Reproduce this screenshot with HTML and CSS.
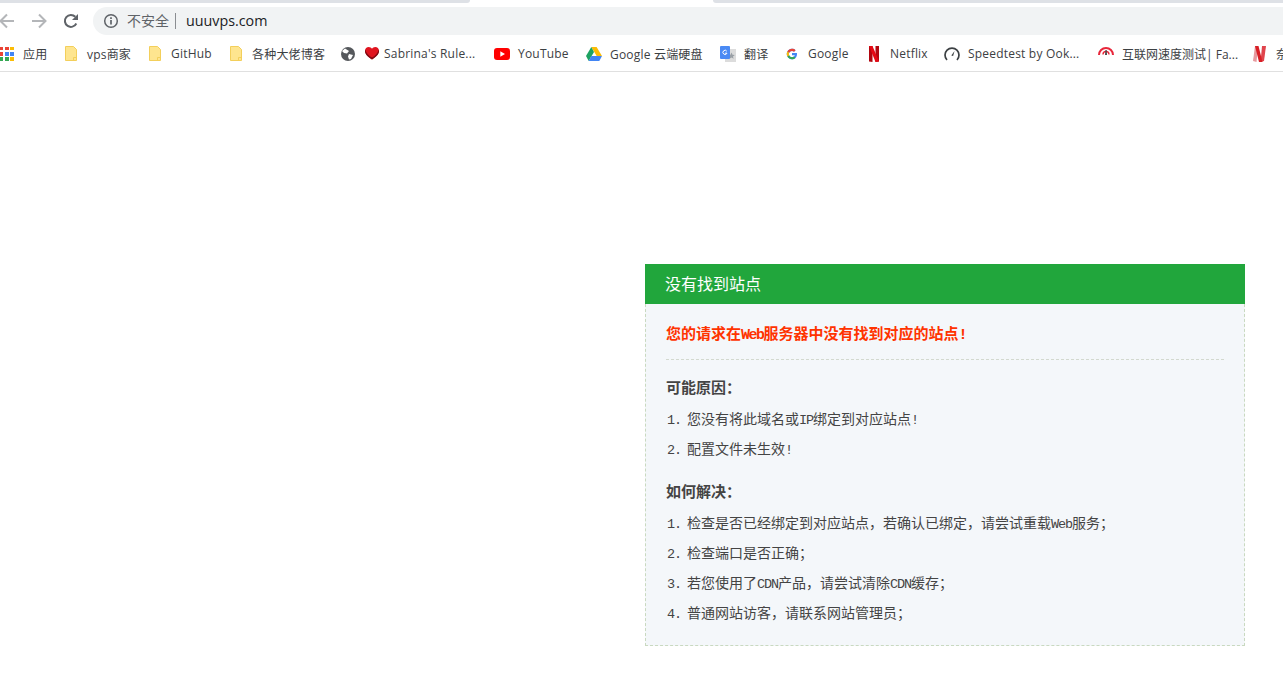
FILE: index.html
```html
<!DOCTYPE html>
<html lang="zh-CN">
<head>
<meta charset="utf-8">
<title>没有找到站点</title>
<link rel="stylesheet" href="styles.css">
</head>
<body>
<header class="chrome">
  <div class="tabstrip"><div class="tab-left"></div><div class="tab-active"></div><div class="tab-right"></div></div>
  <div class="toolbar">
    <div class="nav">
      <svg class="nav-icon" width="16" height="16" viewBox="0 0 16 16"><path d="M15 8H1.500M8 1.500 1.500 8 8 14.500" fill="none" stroke="#b4b6b9" stroke-width="2"/></svg>
      <svg class="nav-icon" width="16" height="16" viewBox="0 0 16 16"><path d="M1 8h13.500M8 1.500 14.500 8 8 14.500" fill="none" stroke="#b4b6b9" stroke-width="2"/></svg>
      <svg class="nav-icon" width="16" height="16" viewBox="0 0 16 16"><path d="M13.300 10.500A6 6 0 1 1 12.300 3.800" fill="none" stroke="#5f6368" stroke-width="2"/><path d="M15 1v6H9z" fill="#5f6368"/></svg>
    </div>
    <div class="omnibox">
      <svg width="16" height="16" viewBox="0 0 16 16"><circle cx="8" cy="8" r="6.300" fill="none" stroke="#5f6368" stroke-width="1.500"/><path d="M8 7v4.500" stroke="#5f6368" stroke-width="1.700"/><path d="M8 4.200v1.700" stroke="#5f6368" stroke-width="1.700"/></svg>
      <span class="insecure">不安全</span>
      <span class="sep"></span>
      <span class="url">uuuvps.com</span>
    </div>
  </div>
  <nav class="bookmarks">
    <a class="bm"><svg class="apps" width="14" height="14" viewBox="0 0 14 14"><rect x="0" y="0" width="3" height="3" fill="#ea4335"/><rect x="5" y="0" width="4" height="3" fill="#ea4335"/><rect x="10" y="0" width="4" height="3" fill="#fbbc05"/><rect x="0" y="5" width="3" height="4" fill="#ea4335"/><rect x="5" y="5" width="4" height="4" fill="#4285f4"/><rect x="10" y="5" width="4" height="4" fill="#4285f4"/><rect x="0" y="10" width="3" height="4" fill="#34a853"/><rect x="5" y="10" width="4" height="4" fill="#34a853"/><rect x="10" y="10" width="4" height="4" fill="#fbbc05"/></svg><span>应用</span></a>
    <a class="bm"><svg class="folder" width="12" height="15" viewBox="0 0 12 15"><path d="M.5.500h8l3 3v11H.5z" fill="#fee58f" stroke="#f3cf5b"/><path d="M8.500 14.500v-3h3" fill="none" stroke="#f3cf5b"/></svg><span>vps商家</span></a>
    <a class="bm"><svg class="folder" width="12" height="15" viewBox="0 0 12 15"><path d="M.5.500h8l3 3v11H.5z" fill="#fee58f" stroke="#f3cf5b"/><path d="M8.500 14.500v-3h3" fill="none" stroke="#f3cf5b"/></svg><span>GitHub</span></a>
    <a class="bm"><svg class="folder" width="12" height="15" viewBox="0 0 12 15"><path d="M.5.500h8l3 3v11H.5z" fill="#fee58f" stroke="#f3cf5b"/><path d="M8.500 14.500v-3h3" fill="none" stroke="#f3cf5b"/></svg><span>各种大佬博客</span></a>
    <a class="bm"><svg width="14" height="14" viewBox="0 0 14 14"><circle cx="7" cy="7" r="7" fill="#55585c"/><path d="M4 1.500 8 4 6 6.500 3 6 1 4zM8 7l4 1-2 4-2 .5-1-3z" fill="#fff"/></svg><svg class="heart" width="14" height="13" viewBox="0 0 14 13"><path d="M7 12.500C3 9.500 0 7.300 0 3.900 0 1.700 1.700 0 3.800 0 5.100 0 6.300.7 7 1.800 7.700.7 8.900 0 10.200 0 12.300 0 14 1.700 14 3.900c0 3.400-3 5.600-7 8.600z" fill="#e0141f"/><path d="M7 12.500C3 9.500 0 7.300 0 3.900c0-.5.100-1 .3-1.500C1 6 4 9 7 10.500c3-1.500 6-4.500 6.700-8.100.2.500.3 1 .3 1.500 0 3.400-3 5.600-7 8.600z" fill="#7d0c14"/></svg><span>Sabrina's Rule...</span></a>
    <a class="bm"><svg class="wide" width="16" height="12" viewBox="0 0 16 12"><rect width="16" height="12" rx="3" fill="#f00"/><path d="M6.300 3.200v5.600L11 6z" fill="#fff"/></svg><span>YouTube</span></a>
    <a class="bm"><svg class="wide" width="16" height="14" viewBox="0 0 16 14"><path d="M5.300 0h5.300l5.400 9h-5.300z" fill="#fbbc05"/><path d="M5.300 0 0 9l2.700 5 5.300-9z" fill="#1ea362"/><path d="M2.700 14h10.600l2.700-5H5.300z" fill="#4285f4"/></svg><span>Google 云端硬盘</span></a>
    <a class="bm"><svg class="wide" width="16" height="16" viewBox="0 0 16 16"><rect x="5" y="3" width="11" height="13" fill="#dcdcdc"/><path d="M11.500 6.500l1 2.300 2.300.2-1.800 1.500.6 2.300-2.100-1.300-2 1.300.6-2.300L8.300 9l2.200-.2z" fill="#9aa0a6"/><rect width="10" height="13" rx="1" fill="#4a8af4"/><path d="M6.800 5.200A2.100 2.100 0 1 0 7 7.200H5" fill="none" stroke="#fff" stroke-width="1"/></svg><span>翻译</span></a>
    <a class="bm"><svg class="gicon" width="12" height="12" viewBox="0 0 48 48"><path d="M43.600 20H24v8.500h11.300C33.700 33.300 29.300 36.500 24 36.500c-6.900 0-12.500-5.600-12.500-12.500S17.100 11.500 24 11.500c3.100 0 6 1.100 8.200 3l6-6C34.500 5 29.500 3 24 3 12.400 3 3 12.400 3 24s9.400 21 21 21c10.500 0 20-7.600 20-21 0-1.400-.1-2.700-.4-4z" fill="#4285f4"/><path d="M5.400 14.300l7 5.100C14.200 14.800 18.700 11.500 24 11.500c3.100 0 6 1.100 8.200 3l6-6C34.500 5 29.500 3 24 3 16 3 9 7.500 5.400 14.300z" fill="#ea4335"/><path d="M24 45c5.400 0 10.300-1.900 14-5.300l-6.500-5.500c-2 1.500-4.600 2.300-7.500 2.300-5.300 0-9.700-3.200-11.400-7.900l-6.900 5.300C9.100 40.400 16 45 24 45z" fill="#34a853"/><path d="M12.600 28.600c-.7-1.400-1.100-3-1.100-4.600s.4-3.200.9-4.600l-7-5.100C3.900 17.200 3 20.500 3 24s.9 6.900 2.700 9.900z" fill="#fbbc05"/></svg><span>Google</span></a>
    <a class="bm"><svg class="gicon" width="12" height="16" viewBox="0 0 12 16"><path d="M1 0h3.500v16L1 15.500z" fill="#b1060f"/><path d="M7.500 0H11v15.500L7.500 16z" fill="#b1060f"/><path d="M1 0h3.500L11 15.500 7.500 16z" fill="#e50914"/></svg><span>Netflix</span></a>
    <a class="bm"><svg class="wide" width="16" height="16" viewBox="0 0 16 16"><path d="M3 14A7 7 0 1 1 13 14" fill="none" stroke="#3c4043" stroke-width="1.700"/><path d="M7.300 9.500 10.500 5l-1.400 5z" fill="#3c4043"/></svg><span>Speedtest by Ook...</span></a>
    <a class="bm"><svg class="wide arc" width="16" height="11" viewBox="0 0 16 11"><path d="M1 10A7 7 0 0 1 15 10" fill="none" stroke="#e8273b" stroke-width="2"/><path d="M5 9.500A3 3 0 0 1 11 9.500" fill="none" stroke="#e8273b" stroke-width="1.400"/><path d="M7 10 7.500 5h1.200l.3 5z" fill="#444"/></svg><span>互联网速度测试| Fa...</span></a>
    <a class="bm"><svg class="gicon" width="13" height="16" viewBox="0 0 13 16"><path d="M2 0h3L3.500 16 0 15z" fill="#e79a9f"/><path d="M9 0h4l-2 15-3.500 1z" fill="#e0444c"/><path d="M2 0h3.500l4 16H6z" fill="#d81f26"/></svg><span>奈飞</span></a>
  </nav>
</header>

<main class="page">
  <section class="card">
    <h1 class="card-title">没有找到站点</h1>
    <div class="card-body">
      <p class="alert">您的请求在<span class="lat">Web</span>服务器中没有找到对应的站点<span class="lat">!</span></p>
      <h2 class="cause">可能原因&#xFF1A;</h2>
      <ol class="steps">
        <li><span class="num">1.</span><span>您没有将此域名或<span class="lat">IP</span>绑定到对应站点<span class="lat">!</span></span></li>
        <li><span class="num">2.</span><span>配置文件未生效<span class="lat">!</span></span></li>
      </ol>
      <h2 class="cause">如何解决&#xFF1A;</h2>
      <ol class="steps">
        <li><span class="num">1.</span><span>检查是否已经绑定到对应站点&#xFF0C;若确认已绑定&#xFF0C;请尝试重载<span class="lat">Web</span>服务&#xFF1B;</span></li>
        <li><span class="num">2.</span><span>检查端口是否正确&#xFF1B;</span></li>
        <li><span class="num">3.</span><span>若您使用了<span class="lat">CDN</span>产品&#xFF0C;请尝试清除<span class="lat">CDN</span>缓存&#xFF1B;</span></li>
        <li><span class="num">4.</span><span>普通网站访客&#xFF0C;请联系网站管理员&#xFF1B;</span></li>
      </ol>
    </div>
  </section>
</main>
</body>
</html>
```
FILE: styles.css
```css
* { box-sizing: border-box; }
html, body { margin: 0; padding: 0; background: #fff; }
body { height: 686px; overflow: hidden; }

.chrome { display: flex; flex-direction: column; height: 72px; border-bottom: 1px solid #e0e0e0; font-family: "Open Sans", "Noto Sans CJK SC", sans-serif; }

.tabstrip { display: flex; height: 3px; }
.tab-left { width: 470px; background: #dee1e6; border-bottom-right-radius: 6px; }
.tab-active { width: 243px; background: #fff; }
.tab-right { flex: 1; background: #dee1e6; border-bottom-left-radius: 6px; }

.toolbar { display: flex; height: 33px; padding-top: 4px; }
.nav { display: flex; align-items: center; gap: 16px; width: 93px; height: 28px; margin-left: -1px; }
.nav-icon { flex: none; }
.omnibox { flex: 1; height: 28px; margin-left: 1px; display: flex; align-items: center; padding-left: 10px; background: #f1f3f4; border-radius: 14px 0 0 14px; }
.insecure { margin-left: 8px; font-size: 14px; color: #5f6368; line-height: 28px; }
.sep { width: 1px; height: 16px; margin: 0 10px 0 6px; background: #8a8d91; }
.url { font-size: 14.3px; color: #202124; line-height: 28px; }

.bookmarks { display: grid; grid-template-columns: 65px 84px 81px 111px 153px 92px 134px 66px 82px 76px 154px 155px 30px; height: 35px; align-items: center; overflow: hidden; }
.bm { display: flex; align-items: center; font-size: 12px; letter-spacing: .2px; color: #3c4043; white-space: nowrap; overflow: hidden; height: 35px; }
.bm svg { flex: none; }
.bm span { display: block; }
.apps { margin-right: 9px; }
.folder { margin-right: 10px; }
.wide { margin-right: 8px; }
.arc { margin-bottom: 6px; }
.arc + span { letter-spacing: 0; }
.gicon { margin-right: 10px; }
.heart { margin: 0 5px 0 10px; }

.page { display: flex; justify-content: flex-end; padding: 192px 38px 0 0; }
.card { width: 600px; font-family: "Noto Sans CJK SC", sans-serif; }
.card-title { margin: 0; height: 40px; padding-left: 20px; font-size: 16px; font-weight: 400; line-height: 38px; color: #fff; background: #21a63c; }
.card-body { padding: 0 20px 17px; background: #f4f7fa; border: 1px dashed #c9d9c0; border-top: 0; }
.alert { margin: 0; padding: 14px 0 11px; font-size: 15px; font-weight: 700; line-height: 30px; color: #ff3300; border-bottom: 1px dashed #d3d9cf; }
.cause { margin: 12px 0 0; padding-bottom: 1px; font-size: 15px; font-weight: 700; line-height: 30px; color: #444; }
.steps { margin: 0; padding: 0 0 1px; list-style: none; font-size: 14px; line-height: 30px; color: #444; }
.steps li { display: flex; align-items: baseline; height: 30px; }
.num { width: 21px; padding-left: 1px; font-family: "Liberation Mono", monospace; font-size: 13.5px; letter-spacing: -1.1px; }
.lat { font-family: "Liberation Mono", monospace; font-size: 13.5px; letter-spacing: -1.1px; line-height: 1; }
.alert .lat { font-size: 15px; letter-spacing: -1.5px; }
```
